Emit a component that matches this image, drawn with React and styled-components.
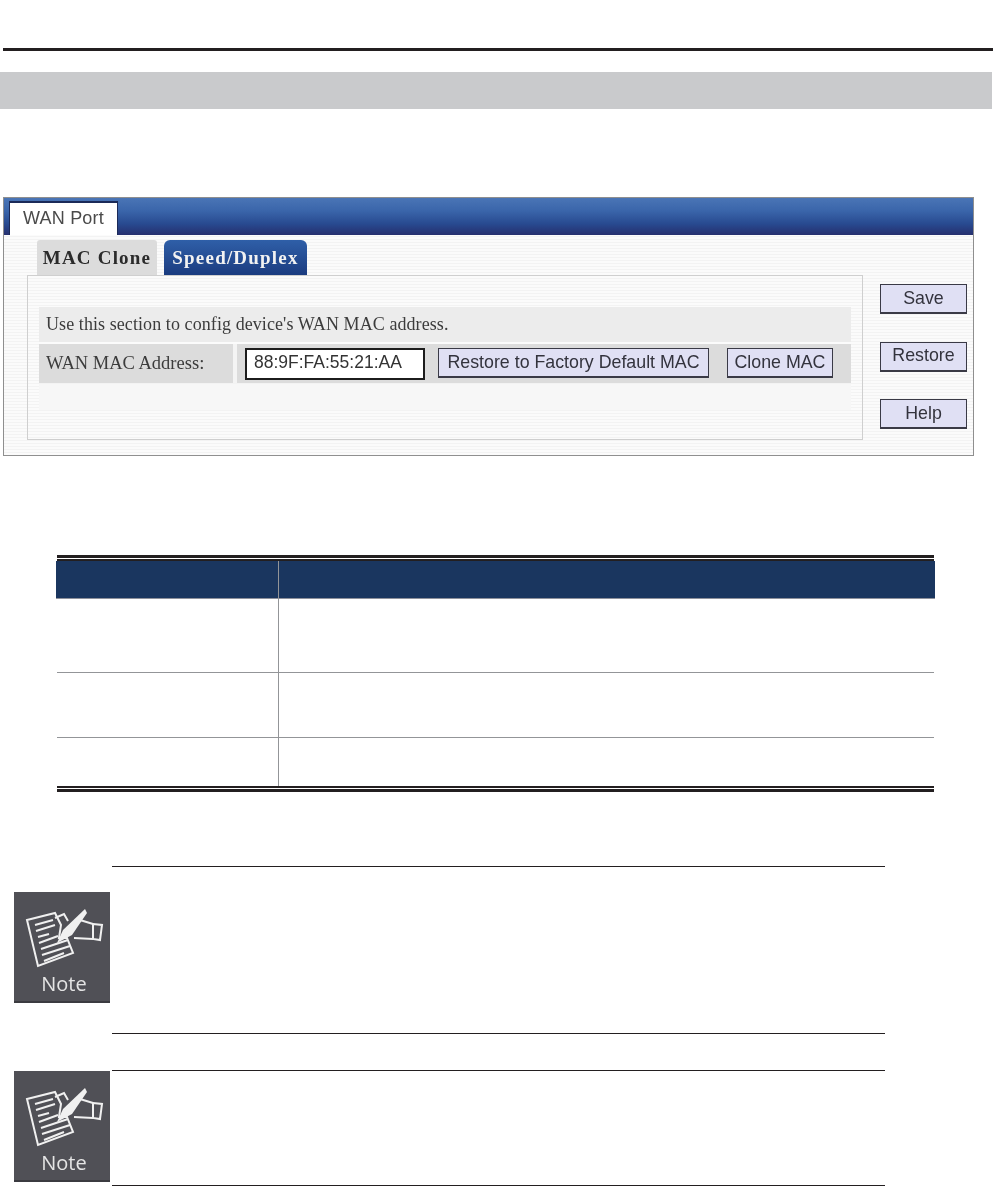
import React from "react";
import styled, { createGlobalStyle } from "styled-components";

const GlobalStyle = createGlobalStyle`
  html, body {
    margin: 0;
    padding: 0;
    background: #ffffff;
  }
`;

const Page = styled.div`
  width: 993px;
  height: 1186px;
  overflow: hidden;
  background: #ffffff;
`;

const TopRule = styled.div`
  height: 3px;
  margin: 48px 0 0 3px;
  background: #231f20;
`;

const SectionBar = styled.div`
  width: 992px;
  height: 37px;
  margin-top: 21px;
  background: #c9cacc;
`;

const Panel = styled.div`
  width: 971px;
  height: 259px;
  margin: 88px 0 0 3px;
  box-sizing: border-box;
  border: 1px solid #8f8f8f;
  display: flex;
  flex-direction: column;
  background: repeating-linear-gradient(to bottom, #fbfbfb 0, #fbfbfb 2px, #f3f3f3 2px, #f3f3f3 3px);
  filter: blur(0.4px);
`;

const PanelHeader = styled.div`
  height: 37px;
  flex: none;
  display: flex;
  align-items: flex-end;
  padding-left: 5px;
  background: linear-gradient(to bottom, #4a75b6 0%, #3a65aa 35%, #284a90 70%, #262f6e 100%);
`;

const HeaderTab = styled.div`
  box-sizing: border-box;
  width: 109px;
  height: 34px;
  padding-bottom: 2px;
  display: flex;
  align-items: center;
  justify-content: center;
  background: #ffffff;
  border-top: 2px solid #1b2a58;
  border-left: 1px solid #1b2a58;
  border-right: 1px solid #1b2a58;
  font: 18px "Liberation Sans", Arial, sans-serif;
  letter-spacing: 0.2px;
  color: #4a4a4a;
`;

const PanelBody = styled.div`
  flex: 1;
  display: flex;
  padding-left: 23px;
`;

const MainColumn = styled.div`
  width: 836px;
  padding-top: 5px;
`;

const SubTabs = styled.div`
  display: flex;
  gap: 7px;
  margin-left: 10px;
`;

const SubTab = styled.div`
  box-sizing: border-box;
  height: 35px;
  width: ${({ $width }) => $width}px;
  display: flex;
  align-items: center;
  justify-content: center;
  border-radius: ${({ $active }) => ($active ? "6px 6px 0 0" : "3px 3px 0 0")};
  background: ${({ $active }) =>
    $active ? "linear-gradient(to bottom, #2f5fa8, #1b3c80)" : "#dcdcdc"};
  color: ${({ $active }) => ($active ? "#f2f2f2" : "#2b2b2b")};
  font: bold 19px "Liberation Serif", "Times New Roman", serif;
  letter-spacing: 1.2px;
`;

const ContentBox = styled.div`
  box-sizing: border-box;
  height: 165px;
  padding: 31px 11px 0;
  border: 1px solid #cfcfcf;
  display: flex;
  flex-direction: column;
`;

const InfoRow = styled.div`
  height: 35px;
  padding-left: 7px;
  display: flex;
  align-items: center;
  background: #ececec;
  font: 18px "Liberation Serif", "Times New Roman", serif;
  letter-spacing: 0.08px;
  color: #3c3c3c;
`;

const FieldRow = styled.div`
  height: 39px;
  margin-top: 2px;
  display: flex;
  background: #dcdcdc;
`;

const FieldLabel = styled.div`
  width: 198px;
  flex: none;
  padding-left: 7px;
  box-sizing: border-box;
  display: flex;
  align-items: center;
  border-right: 4px solid #f4f4f4;
  font: 18.5px "Liberation Serif", "Times New Roman", serif;
  color: #3c3c3c;
`;

const FieldControls = styled.div`
  display: flex;
  align-items: flex-start;
  padding: 4px 0 0 8px;
`;

const MacInput = styled.input`
  box-sizing: border-box;
  width: 180px;
  height: 32px;
  padding: 0 0 3px 7px;
  border: 2px solid #1c1c1c;
  background: #ffffff;
  font: 17.5px "Liberation Sans", Arial, sans-serif;
  color: #333333;
  outline: none;
`;

const LilacButton = styled.button`
  box-sizing: border-box;
  width: ${({ $width }) => $width}px;
  height: 30px;
  margin-left: ${({ $gap }) => $gap || 0}px;
  padding: 0 0 1px;
  border: 1px solid #3a3a46;
  border-bottom-width: 2px;
  background: #e0e0f4;
  font: 17.8px "Liberation Sans", Arial, sans-serif;
  color: #33333d;
`;

const ExtraRow = styled.div`
  height: 26px;
  margin-top: 1px;
  background: #f7f7f7;
`;

const SideColumn = styled.div`
  width: 87px;
  margin-left: 17px;
  padding-top: 49px;
  display: flex;
  flex-direction: column;
  gap: 27.5px;
`;

const TableWrap = styled.div`
  width: 877px;
  margin: 99px 0 0 57px;
`;

const TableRule = styled.div`
  height: ${({ $h }) => $h}px;
  margin-top: ${({ $top }) => $top || 0}px;
  background: #231f20;
`;

const HeaderRow = styled.div`
  display: grid;
  grid-template-columns: 223px 1fr;
  height: 37px;
  margin: 0 -1px;
  background: #1a365f;
  border-bottom: 1px solid #8e919b;
`;

const BodyRow = styled.div`
  display: grid;
  grid-template-columns: 222px 1fr;
  box-sizing: border-box;
  height: ${({ $h }) => $h}px;
  border-bottom: ${({ $last }) => ($last ? "none" : "1px solid #939598")};
`;

const Cell = styled.div`
  border-right: ${({ $first }) => ($first ? "1px solid #939598" : "none")};
`;

const NoteBlock = styled.div`
  display: flex;
  height: ${({ $h }) => $h}px;
  margin-top: ${({ $top }) => $top}px;
  padding-left: 14px;
`;

const NoteBadge = styled.div`
  width: 96px;
  height: 111px;
  margin-top: ${({ $offset }) => $offset}px;
  flex: none;
  display: flex;
  flex-direction: column;
  align-items: center;
  box-sizing: border-box;
  background: #505056;
  border-bottom: 2px solid #3b3b40;
  filter: blur(0.5px);
`;

const NoteLabel = styled.span`
  padding-left: 4px;
  margin-top: -2px;
  font: 20px "Open Sans", "Liberation Sans", sans-serif;
  line-height: 24px;
  color: #e4e4e4;
`;

const NoteDrawing = () => (
  <svg width="96" height="82" viewBox="0 0 96 82" fill="none" stroke="#f0f0f0" strokeWidth="2">
    <path d="M13 28 L41 21 L47 33 L45 46 L53 46 L59 61 L24 74 Z" />
    <path d="M21 33 L39 28 M22 39 L41 33 M24 45 L35 42 M25 51 L44 44 M27 57 L54 48 M28 63 L56 54 M30 69 L50 61" />
    <path d="M41 26 L50 22 L54 29" />
    <path d="M43 51 L49 38 L71 17 L73 21 L58 43 Z" fill="#f0f0f0" stroke="none" />
    <path d="M66 28 L79 32 M79 47 L60 46" />
    <path d="M79 32 L88 33 L86 48 L79 47 Z" />
  </svg>
);

const NoteBody = styled.div`
  width: 773px;
  margin-left: 2px;
  box-sizing: border-box;
  border-top: 1px solid #231f20;
  border-bottom: 1px solid #231f20;
`;

const Note = ({ h, top, offset }) => (
  <NoteBlock $h={h} $top={top}>
    <NoteBadge $offset={offset}>
      <NoteDrawing />
      <NoteLabel>Note</NoteLabel>
    </NoteBadge>
    <NoteBody />
  </NoteBlock>
);

const rowHeights = [74, 65, 48];

const App = () => {
  return (
    <Page>
      <GlobalStyle />
      <TopRule />
      <SectionBar />

      <Panel>
        <PanelHeader>
          <HeaderTab>WAN Port</HeaderTab>
        </PanelHeader>
        <PanelBody>
          <MainColumn>
            <SubTabs>
              <SubTab $width={120}>MAC Clone</SubTab>
              <SubTab $width={143} $active>
                Speed/Duplex
              </SubTab>
            </SubTabs>
            <ContentBox>
              <InfoRow>Use this section to config device's WAN MAC address.</InfoRow>
              <FieldRow>
                <FieldLabel>WAN MAC Address:</FieldLabel>
                <FieldControls>
                  <MacInput readOnly value="88:9F:FA:55:21:AA" />
                  <LilacButton $width={271} $gap={13}>
                    Restore to Factory Default MAC
                  </LilacButton>
                  <LilacButton $width={106} $gap={18}>
                    Clone MAC
                  </LilacButton>
                </FieldControls>
              </FieldRow>
              <ExtraRow />
            </ContentBox>
          </MainColumn>
          <SideColumn>
            <LilacButton $width={87}>Save</LilacButton>
            <LilacButton $width={87}>Restore</LilacButton>
            <LilacButton $width={87}>Help</LilacButton>
          </SideColumn>
        </PanelBody>
      </Panel>

      <TableWrap>
        <TableRule $h={3} />
        <TableRule $h={2} $top={1} />
        <HeaderRow>
          <Cell $first />
          <Cell />
        </HeaderRow>
        {rowHeights.map((h, i) => (
          <BodyRow key={i} $h={h} $last={i === rowHeights.length - 1}>
            <Cell $first />
            <Cell />
          </BodyRow>
        ))}
        <TableRule $h={2} />
        <TableRule $h={3} $top={1} />
      </TableWrap>

      <Note h={168} top={74} offset={26} />
      <Note h={116} top={36} offset={1} />
    </Page>
  );
};

export default App;
